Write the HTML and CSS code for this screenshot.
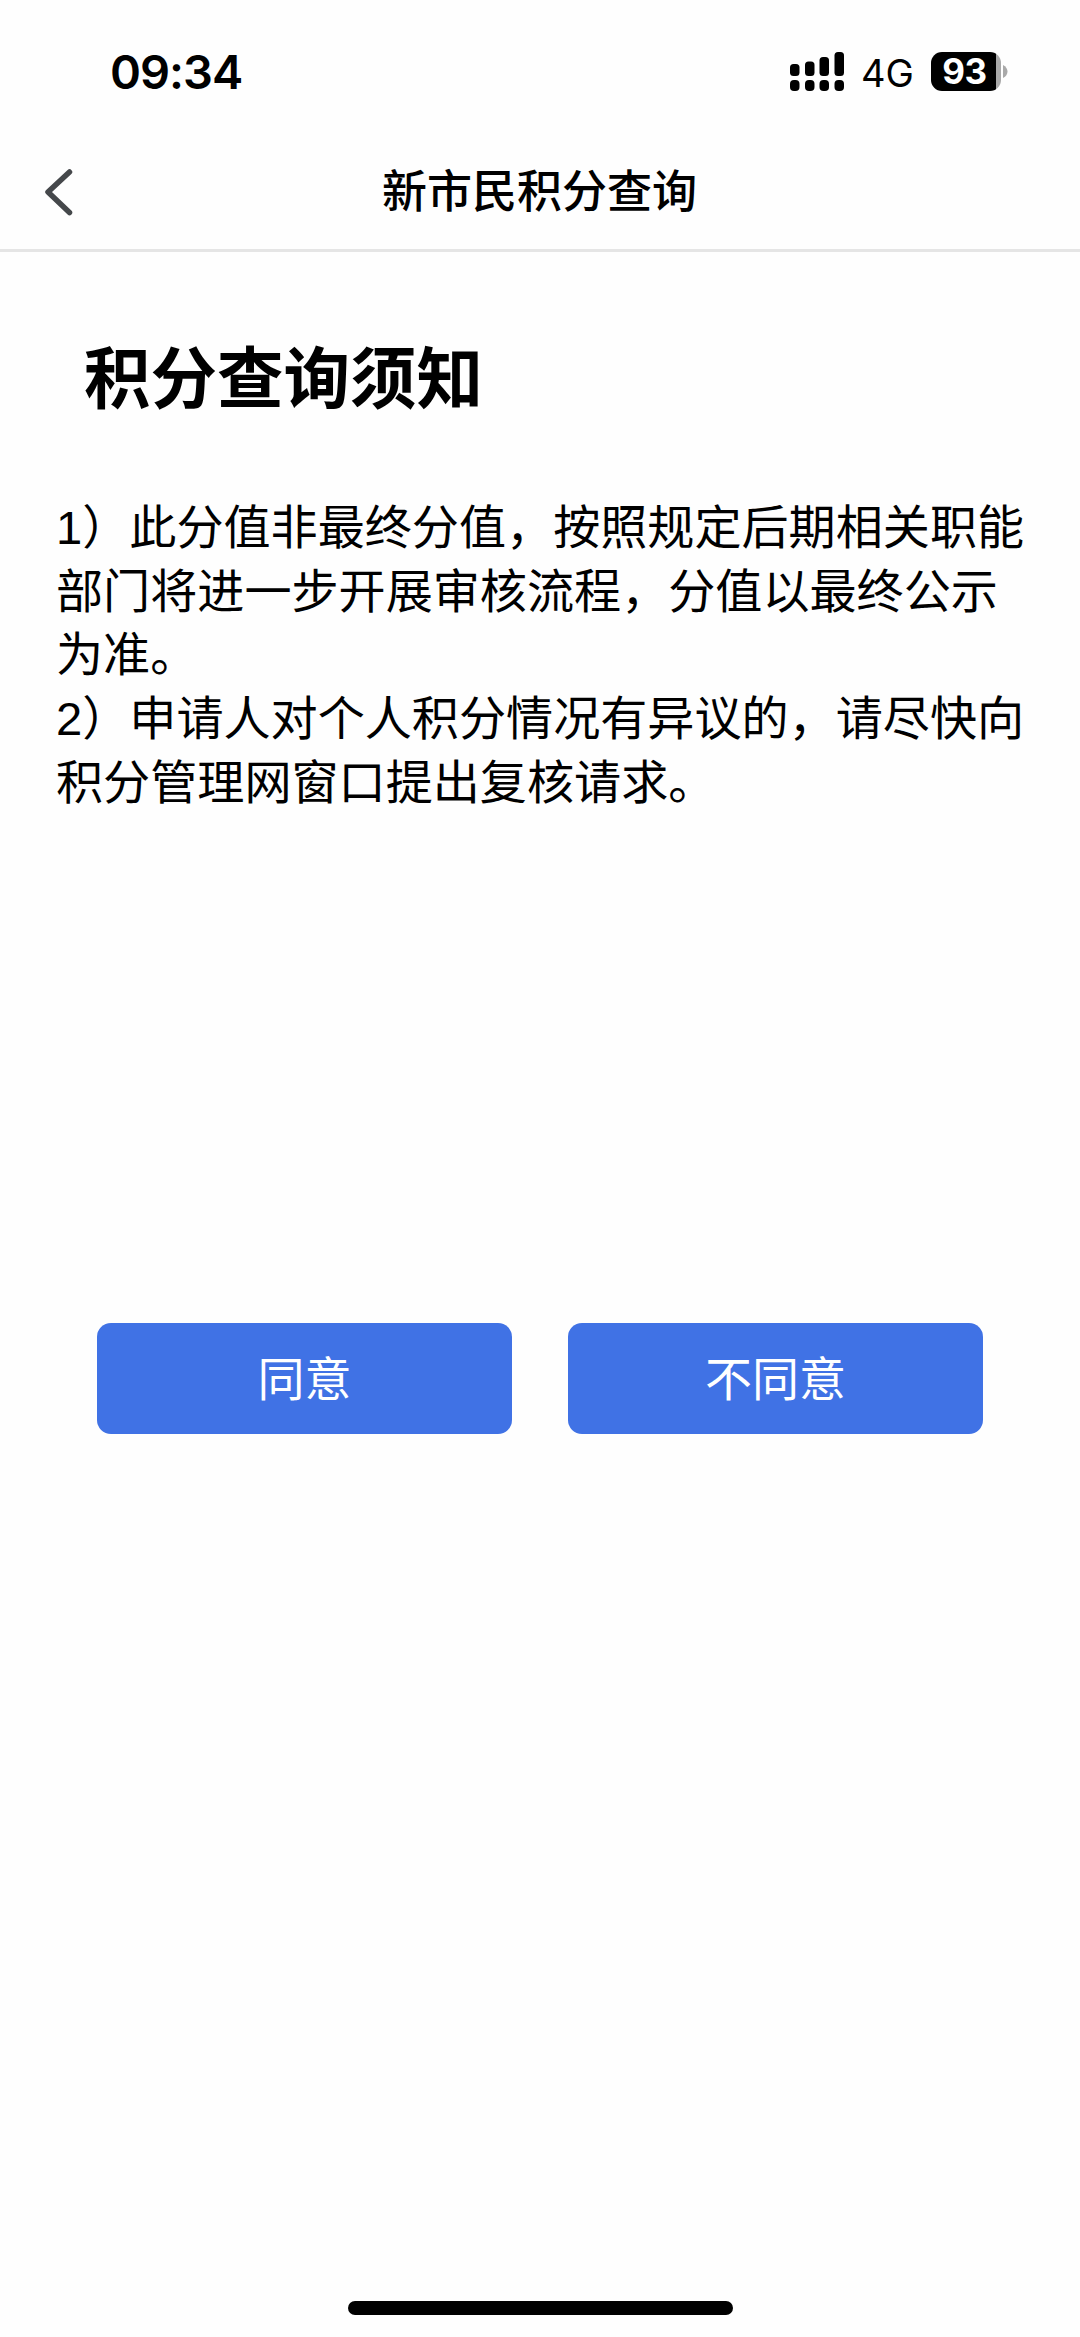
FILE: index.html
```html
<!DOCTYPE html>
<html lang="zh-CN">
<head>
    <meta charset="UTF-8">
    <title>新市民积分查询</title>
    <link rel="stylesheet" href="styles.css">
</head>
<body>

<div class="status-bar">
    <div class="time">09:34</div>
    <div class="status-right">
        <svg class="signal" width="54" height="39" viewBox="0 0 54 39">
            <rect x="0" y="12" width="9.5" height="12" rx="3.5"/>
            <rect x="15" y="9.5" width="9.5" height="14.5" rx="3.5"/>
            <rect x="29.5" y="5" width="9.5" height="19" rx="3.5"/>
            <rect x="44.5" y="0" width="9.5" height="24" rx="3.5"/>
            <rect x="0" y="28" width="9.5" height="11" rx="4"/>
            <rect x="15" y="28" width="9.5" height="11" rx="4"/>
            <rect x="29.5" y="28" width="9.5" height="11" rx="4"/>
            <rect x="44.5" y="28" width="9.5" height="11" rx="4"/>
        </svg>
        <div class="network">4G</div>
        <div class="battery">93</div>
        <svg class="battery-cap" width="5" height="13" viewBox="0 0 5 13">
            <path d="M0 0 C6 3 6 10 0 13 Z"/>
        </svg>
    </div>
</div>

<div class="navbar">
    <svg class="back" width="30" height="48" viewBox="0 0 30 48">
        <path d="M24.5 4 L3 24 L24.5 44.5"/>
    </svg>
    <div class="nav-title">新市民积分查询</div>
</div>

<div class="content">
    <h1>积分查询须知</h1>
    <p>1）此分值非最终分值，按照规定后期相关职能<br>部门将进一步开展审核流程，分值以最终公示<br>为准。</p>
    <p>2）申请人对个人积分情况有异议的，请尽快向<br>积分管理网窗口提出复核请求。</p>
</div>

<div class="buttons">
    <button>同意</button>
    <button>不同意</button>
</div>

<div class="home-indicator"></div>

</body>
</html>
```
FILE: styles.css
```css
* {
    box-sizing: border-box;
}
body {
    margin: 0;
    height: 2337px;
    display: flex;
    flex-direction: column;
    font-family: "Liberation Sans", "Noto Sans CJK SC", sans-serif;
    background-color: #fefefe;
    color: #000;
    overflow: hidden;
}
.status-bar {
    display: flex;
    justify-content: space-between;
    align-items: center;
    height: 143px;
    padding: 0 72px 0 110px;
    font-family: Inter, sans-serif;
}
.time {
    font-size: 47px;
    font-weight: 600;
    letter-spacing: -1px;
}
.status-right {
    display: flex;
    align-items: center;
}
.network {
    width: 53px;
    margin: 3px 0 0 17px;
    font-size: 38px;
    font-weight: 400;
    white-space: nowrap;
}
.battery {
    width: 70px;
    height: 39px;
    margin-left: 17px;
    padding-right: 3px;
    border-radius: 11px;
    background: linear-gradient(to right, #000 65px, #a9a9a9 65px);
    color: #fff;
    font-size: 35px;
    font-weight: 700;
    line-height: 39px;
    text-align: center;
    letter-spacing: -0.5px;
}
.battery-cap {
    margin-left: 2px;
    fill: #a9a9a9;
}
.navbar {
    display: flex;
    align-items: center;
    height: 109px;
    padding: 0 45px 10px;
    border-bottom: 3px solid #e5e5e5;
}
.back {
    margin-top: 2px;
}
.back path {
    fill: none;
    stroke: #45484b;
    stroke-width: 5.5;
    stroke-linecap: round;
    stroke-linejoin: round;
}
.nav-title {
    flex: 1;
    margin: -4px 31px 0 0;
    font-family: "Noto Sans CJK SC", sans-serif;
    font-size: 45px;
    font-weight: 500;
    line-height: 60px;
    text-align: center;
}
.content {
    height: 1071px;
    padding: 79px 50px 0 56px;
}
h1 {
    margin: 0 0 67px;
    padding-left: 28px;
    font-size: 66.5px;
    font-weight: 700;
    line-height: 98px;
}
p {
    margin: 0;
    font-size: 47.1px;
    line-height: 63.7px;
    white-space: nowrap;
}
.buttons {
    display: flex;
    gap: 56px;
    padding: 0 97px;
}
button {
    flex: 1;
    height: 111px;
    padding: 0 0 6px;
    border: none;
    border-radius: 14px;
    background-color: #4072e5;
    color: #fff;
    font-family: inherit;
    font-size: 47px;
}
.home-indicator {
    width: 385px;
    height: 14px;
    margin: auto auto 22px;
    border-radius: 7px;
    background-color: #000;
}
```
